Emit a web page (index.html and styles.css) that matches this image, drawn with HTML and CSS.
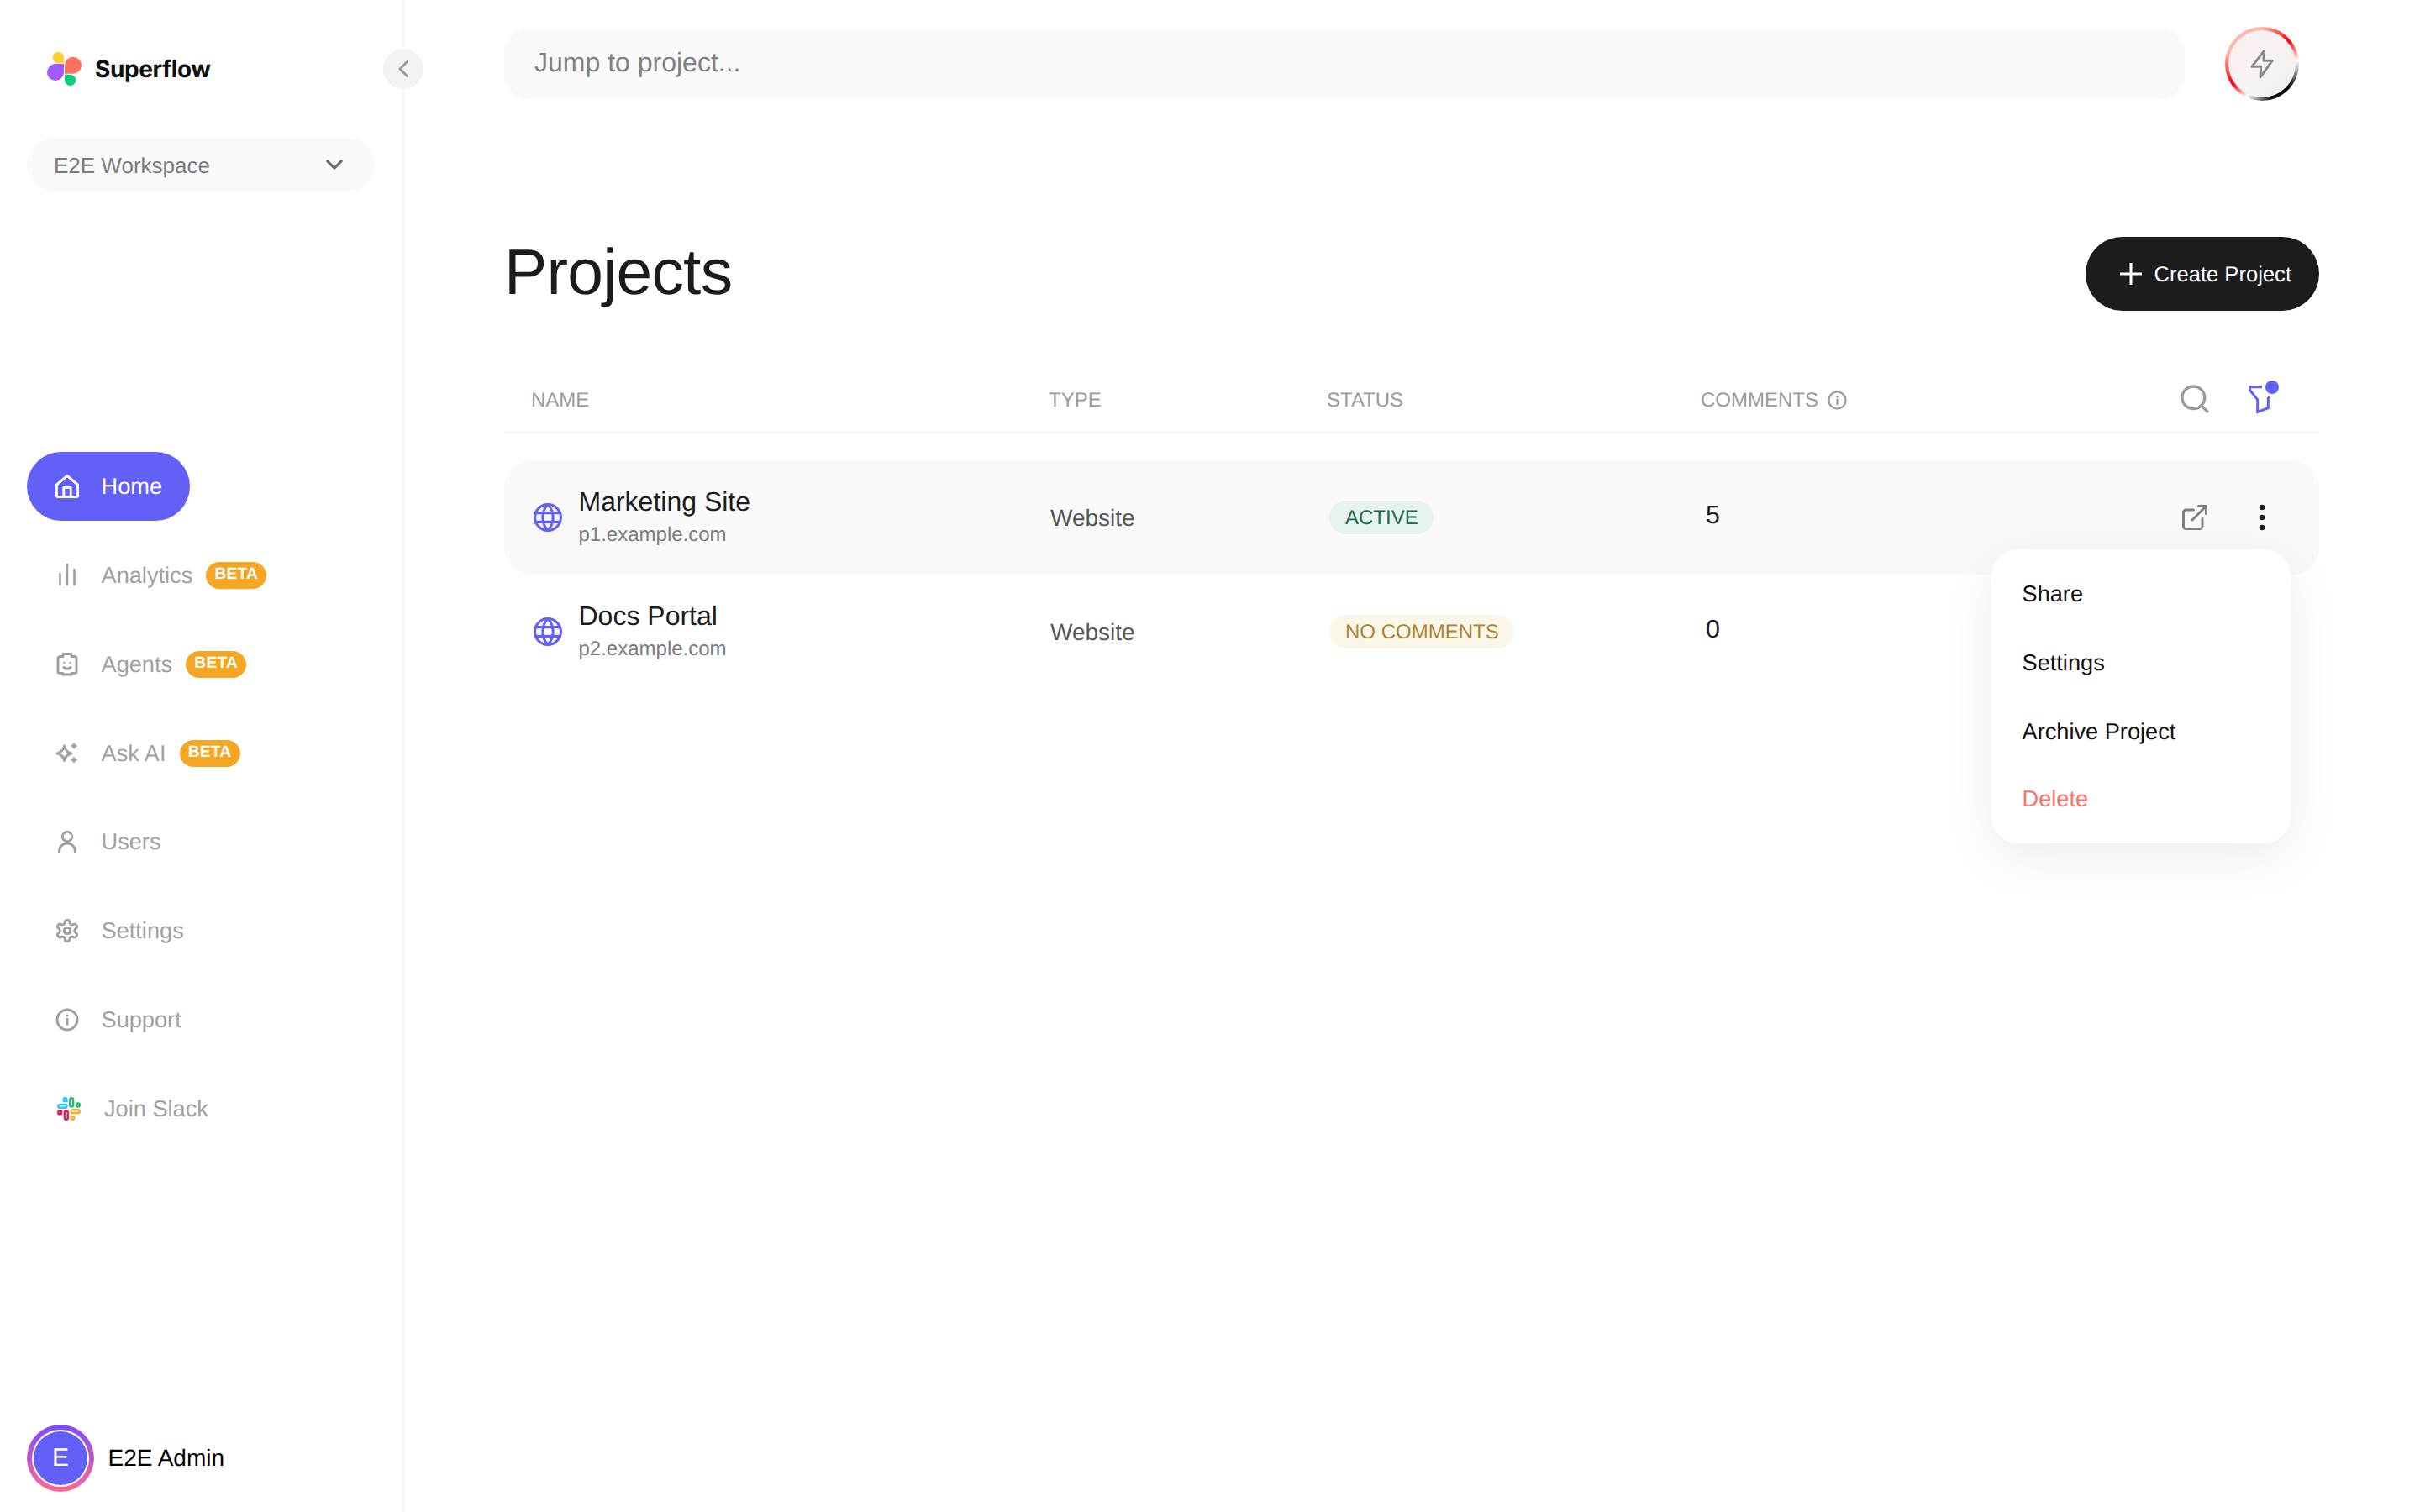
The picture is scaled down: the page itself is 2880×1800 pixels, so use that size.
FILE: index.html
```html
<!DOCTYPE html>
<html lang="en">
<head>
<meta charset="utf-8">
<title>Projects - Superflow</title>
<link rel="stylesheet" href="styles.css">
</head>
<body>
<aside class="sidebar">
  <div class="brand">
    <svg class="logo" viewBox="56 62 41 40">
      <path fill="#ffcf2e" d="M76 75.3H69.3A6.67 6.67 0 1 1 76 68.7Z"/>
      <path fill="#a259ff" d="M76 76V86A10 10 0 1 1 66 76Z"/>
      <path fill="#ff7262" d="M77 87.7V77.7A10 10 0 1 1 87 87.7Z"/>
      <path fill="#0acf83" d="M77 88.7H83.7A6.67 6.67 0 1 1 77 95.3Z"/>
    </svg>
    <span class="brand-name">Superflow</span>
  </div>
  <button class="collapse" type="button" aria-label="Collapse">
    <svg viewBox="0 0 14 22" class="collapse-icon"><path d="M11.5 2.5 3 11l8.5 8.5"/></svg>
  </button>
  <div class="workspace">
    <span>E2E Workspace</span>
    <svg viewBox="0 0 24 16" class="ws-chevron"><path d="M3 3l9 9 9-9"/></svg>
  </div>
  <nav class="nav">
    <a class="nav-item active">
      <svg class="nav-icon" viewBox="2 2 20 20"><path d="M3 10.6 12 3l9 7.6V19.5a1.5 1.5 0 0 1-1.5 1.5h-15A1.5 1.5 0 0 1 3 19.5Z"/><path d="M9 21v-8h6v8"/></svg>
      <span>Home</span>
    </a>
    <a class="nav-item">
      <svg class="nav-icon bars" viewBox="0 0 28 28"><path d="M5.5 25V12M14 25V1M22.5 25V7"/></svg>
      <span>Analytics</span><b class="beta">BETA</b>
    </a>
    <a class="nav-item">
      <svg class="nav-icon" viewBox="0 0 28 28"><path d="M9 1.5h10v3h3.5A2.5 2.5 0 0 1 25 7v15a2.5 2.5 0 0 1-2.5 2.5H19V26H9v-1.5H5.500A2.500 2.500 0 0 1 3 22V7a2.500 2.500 0 0 1 2.500-2.500H9Z"/><path d="M10 17.500q4 3.500 8 0"/><circle class="solid" cx="10.500" cy="12" r="1.300"/><circle class="solid" cx="17.500" cy="12" r="1.300"/></svg>
      <span>Agents</span><b class="beta">BETA</b>
    </a>
    <a class="nav-item">
      <svg class="nav-icon" viewBox="0 0 28 28"><path d="M10.500 5Q12 12 19 14 12 15.500 10.500 22.500 9 15.500 2 14 9 12 10.500 5Z"/><path class="solid" d="M22 0.500Q23 4 26.500 5 23 6 22 9.500 21 6 17.500 5 21 4 22 0.500ZM22 17Q23 20.500 26.500 21.500 23 22.500 22 26 21 22.500 17.500 21.500 21 20.500 22 17Z"/></svg>
      <span>Ask AI</span><b class="beta">BETA</b>
    </a>
    <a class="nav-item">
      <svg class="nav-icon" viewBox="0 0 28 28"><circle cx="14" cy="8" r="5.700"/><path d="M4.500 27.500v-2a9.500 9.500 0 0 1 19 0v2"/></svg>
      <span>Users</span>
    </a>
    <a class="nav-item">
      <svg class="nav-icon" viewBox="1 1 22 22"><path class="thin" d="M12.220 2h-.44a2 2 0 0 0-2 2v.18a2 2 0 0 1-1 1.730l-.43.25a2 2 0 0 1-2 0l-.15-.08a2 2 0 0 0-2.730.73l-.22.38a2 2 0 0 0 .73 2.730l.15.1a2 2 0 0 1 1 1.720v.51a2 2 0 0 1-1 1.740l-.15.09a2 2 0 0 0-.73 2.730l.22.38a2 2 0 0 0 2.730.73l.15-.08a2 2 0 0 1 2 0l.43.25a2 2 0 0 1 1 1.730V20a2 2 0 0 0 2 2h.44a2 2 0 0 0 2-2v-.18a2 2 0 0 1 1-1.730l.43-.25a2 2 0 0 1 2 0l.15.08a2 2 0 0 0 2.730-.73l.22-.39a2 2 0 0 0-.73-2.730l-.15-.08a2 2 0 0 1-1-1.740v-.5a2 2 0 0 1 1-1.740l.15-.09a2 2 0 0 0 .73-2.730l-.22-.38a2 2 0 0 0-2.730-.73l-.15.08a2 2 0 0 1-2 0l-.43-.25a2 2 0 0 1-1-1.730V4a2 2 0 0 0-2-2z"/><circle class="thin" cx="12" cy="12" r="3"/></svg>
      <span>Settings</span>
    </a>
    <a class="nav-item">
      <svg class="nav-icon" viewBox="0 0 28 28"><circle cx="14" cy="14" r="12"/><path d="M14 13v6.500"/><circle class="solid" cx="14" cy="9" r="1.600"/></svg>
      <span>Support</span>
    </a>
    <a class="nav-item slack">
      <svg class="nav-icon" viewBox="1 1 22 22">
        <g class="slack-green"><rect x="13" y="2" width="3" height="8" rx="1.500"/><path d="M19 8.500V10h1.500A1.500 1.500 0 1 0 19 8.500"/></g>
        <g class="slack-red"><rect x="8" y="14" width="3" height="8" rx="1.500"/><path d="M5 15.500V14H3.500A1.500 1.500 0 1 0 5 15.500"/></g>
        <g class="slack-yellow"><rect x="14" y="13" width="8" height="3" rx="1.500"/><path d="M15.500 19H14v1.500a1.500 1.500 0 1 0 1.500-1.500"/></g>
        <g class="slack-blue"><rect x="2" y="8" width="8" height="3" rx="1.500"/><path d="M8.500 5H10V3.500A1.500 1.500 0 1 0 8.500 5"/></g>
      </svg>
      <span>Join Slack</span>
    </a>
  </nav>
  <div class="profile">
    <div class="avatar-ring"><div class="avatar">E</div></div>
    <span class="profile-name">E2E Admin</span>
  </div>
</aside>

<main class="main">
  <div class="topbar">
    <div class="jump">Jump to project...</div>
    <button class="bolt" type="button" aria-label="Activity">
      <span class="bolt-inner">
        <svg viewBox="0 0 48 48" class="bolt-icon"><path d="M26 9.200 12 27.200h10.700L22 39.800 36.300 20.200H26Z"/></svg>
      </span>
    </button>
  </div>

  <div class="title-row">
    <h1>Projects</h1>
    <button class="create" type="button">
      <svg viewBox="0 0 26 26" class="plus"><path d="M13 0v26M0 13h26"/></svg>
      <span class="create-label">Create Project</span>
    </button>
  </div>

  <div class="grid head">
    <div>NAME</div>
    <div>TYPE</div>
    <div>STATUS</div>
    <div class="comments-head">COMMENTS
      <svg viewBox="0 0 24 24" class="info"><circle cx="12" cy="12" r="10.500"/><path d="M12 11v6"/><circle class="solid" cx="12" cy="7.500" r="1.300"/></svg>
    </div>
    <div class="actions">
      <svg viewBox="0 0 24 24" class="act gray"><circle cx="11" cy="11" r="8"/><path d="m21 21-4.300-4.300"/></svg>
      <svg viewBox="0 0 40 40" class="act filter"><path d="M20 5.700H5.500V9.500L14.700 20.700V35.500L27.300 30.700V19.500L29 17.500"/><circle cx="32" cy="6" r="8"/></svg>
    </div>
  </div>

  <div class="grid row hover">
    <div class="name-cell">
      <svg viewBox="1 1 22 22" class="globe"><circle cx="12" cy="12" r="10"/><path d="M12 2a14.500 14.500 0 0 0 0 20 14.500 14.500 0 0 0 0-20M2.600 8.500h18.800M2.600 15.500h18.800"/></svg>
      <div class="name-stack"><div class="pname">Marketing Site</div><div class="purl">p1.example.com</div></div>
    </div>
    <div class="ptype">Website</div>
    <div><span class="pill green">ACTIVE</span></div>
    <div class="count">5</div>
    <div class="actions">
      <svg viewBox="0 0 24 24" class="act ext"><path d="M18 13v6a2 2 0 0 1-2 2H5a2 2 0 0 1-2-2V8a2 2 0 0 1 2-2h6"/><path d="M15 3h6v6M10 14 21 3"/></svg>
      <svg viewBox="0 0 40 40" class="act kebab"><circle cx="20" cy="8" r="3.300"/><circle cx="20" cy="20" r="3.300"/><circle cx="20" cy="32" r="3.300"/></svg>
    </div>
    <div class="menu">
      <div class="menu-item">Share</div>
      <div class="menu-item">Settings</div>
      <div class="menu-item">Archive Project</div>
      <div class="menu-item danger">Delete</div>
    </div>
  </div>

  <div class="grid row">
    <div class="name-cell">
      <svg viewBox="1 1 22 22" class="globe"><circle cx="12" cy="12" r="10"/><path d="M12 2a14.500 14.500 0 0 0 0 20 14.500 14.500 0 0 0 0-20M2.600 8.500h18.800M2.600 15.500h18.800"/></svg>
      <div class="name-stack"><div class="pname">Docs Portal</div><div class="purl">p2.example.com</div></div>
    </div>
    <div class="ptype">Website</div>
    <div><span class="pill amber">NO COMMENTS</span></div>
    <div class="count">0</div>
    <div></div>
  </div>
</main>
</body>
</html>
```

FILE: styles.css
```css
* { box-sizing: border-box; }
html, body { margin: 0; height: 100%; }
body {
  display: flex;
  width: 2880px;
  height: 1800px;
  overflow: hidden;
  background: #fff;
  font-family: "Liberation Sans", Arial, sans-serif;
  color: #1c1c1e;
  text-rendering: geometricPrecision;
}
svg { display: block; flex: none; fill: none; stroke-linecap: round; stroke-linejoin: round; }

/* Sidebar */
.sidebar {
  position: relative;
  flex: none;
  width: 482px;
  height: 1800px;
  padding: 62px 32px 24px;
  border-right: 4px solid #f8f8f8;
  display: flex;
  flex-direction: column;
}
.brand { display: flex; align-items: center; gap: 16px; height: 40px; padding-left: 24px; }
.logo { width: 41px; height: 40px; }
.brand-name { font-family: Inter, "Liberation Sans", sans-serif; font-weight: 700; font-size: 28px; color: #111; letter-spacing: -0.4px; }
.collapse {
  position: absolute;
  top: 58px;
  right: -26px;
  width: 48px;
  height: 48px;
  padding: 0;
  border: 0;
  border-radius: 50%;
  background: #f3f3f3;
  display: flex;
  align-items: center;
  justify-content: center;
}
.collapse-icon { width: 14px; height: 22px; stroke: #9a9a9a; stroke-width: 3; }
.workspace {
  margin-top: 62px;
  height: 64px;
  padding: 2px 37px 0 32px;
  border-radius: 32px;
  background: #f9f9f9;
  display: flex;
  align-items: center;
  justify-content: space-between;
  font-size: 26px;
  color: #7b7b83;
}
.ws-chevron { width: 22px; height: 15px; stroke: #6b6b70; stroke-width: 3.300; margin-top: -2px; }

.nav { margin-top: 310px; display: flex; flex-direction: column; gap: 23.86px; align-items: flex-start; }
.nav-item {
  height: 82px;
  padding: 0 33px 0 34px;
  border-radius: 41px;
  display: flex;
  align-items: center;
  font-size: 27.2px;
  color: #a0a0a5;
}
.nav-item > span { margin-left: 26.5px; }
.nav-item.active { background: #6360f7; color: #fff; }
.nav-item.slack { padding-left: 36px; }
.nav-item.slack > span { margin-left: 28px; }
.nav-icon { width: 28px; height: 28px; stroke: #a0a0a0; stroke-width: 3; }
.nav-icon[viewBox="2 2 20 20"] { stroke: #fff; stroke-width: 2.100; }
.nav-icon.bars { stroke-width: 2.600; }
.nav-icon .thin { stroke-width: 2.300; }
.nav-icon .solid { fill: #a0a0a0; stroke: none; }
.slack .nav-icon { stroke-width: 2; }
.slack-green { stroke: #2eb67d; }
.slack-red { stroke: #e01e5a; }
.slack-yellow { stroke: #ecb22e; }
.slack-blue { stroke: #36c5f0; }
.beta {
  margin-left: 16px;
  width: 72px;
  height: 32px;
  border-radius: 16px;
  background: #f5a623;
  color: #fff;
  font-size: 19.2px;
  font-weight: 700;
  letter-spacing: 0.2px;
  line-height: 29px;
  text-align: center;
}
.profile { margin-top: auto; display: flex; align-items: center; gap: 16.5px; }
.avatar-ring {
  width: 80px;
  height: 80px;
  padding: 2px;
  border-radius: 50%;
  background:
    linear-gradient(#fff, #fff) padding-box,
    linear-gradient(180deg, #7a4dff, #ff6a8c) border-box;
  border: 6px solid transparent;
  display: flex;
}
.avatar {
  flex: 1;
  border-radius: 50%;
  background: #6360f7;
  color: #fff;
  font-size: 30px;
  display: flex;
  align-items: center;
  justify-content: center;
}
.profile-name { font-size: 28px; color: #000; }

/* Main */
.main { position: relative; flex: 1; min-width: 0; padding: 32px 120px 0 118px; }
.topbar { display: flex; align-items: center; gap: 48px; height: 88px; }
.jump {
  width: 2000px;
  height: 84px;
  padding: 0 36px 4px;
  border-radius: 28px;
  background: #f9f9f9;
  display: flex;
  align-items: center;
  font-size: 32px;
  color: #808085;
}
.bolt {
  width: 88px;
  height: 88px;
  padding: 4px;
  border: 0;
  border-radius: 50%;
  background: conic-gradient(#ffb5a8 0deg, #ff0000 50deg, #ffffff 85deg, #000000 130deg, #111 165deg, #ffffff 205deg, #ff0000 235deg, #ffb5a8 290deg, #ffb5a8 360deg);
}
.bolt-inner {
  display: flex;
  align-items: center;
  justify-content: center;
  width: 100%;
  height: 100%;
  border-radius: 50%;
  background: linear-gradient(135deg, #fbeeee 0%, #f7f3f3 55%, #eeeeee 100%);
}
.bolt-icon { width: 48px; height: 48px; stroke: #8a8a8a; stroke-width: 3; }

.title-row { margin-top: 162px; height: 88px; display: flex; align-items: center; justify-content: space-between; }
h1 { margin: -4px 0 0; font-size: 76.8px; font-weight: 400; letter-spacing: -0.770px; color: #1c1c1e; }
.create {
  height: 88px;
  padding: 0 33px 0 40.5px;
  border: 0;
  border-radius: 44px;
  background: #1c1c1e;
  color: #fff;
  display: flex;
  align-items: center;
  gap: 14.5px;
  font-family: inherit;
  font-size: 25.6px;
  text-rendering: geometricPrecision;
}
.create-label { padding-top: 2px; }
.plus { width: 26px; height: 26px; stroke: #fff; stroke-width: 3; }

.grid { display: grid; grid-template-columns: 615px 332px 448px 1fr auto; align-items: center; }
.head {
  margin-top: 66px;
  height: 80px;
  padding: 4px 0 0 32px;
  border-bottom: 2px solid #f3f3f4;
  grid-template-columns: 616px 331px 445px 1fr auto;
  font-size: 24px;
  color: #9a9a9f;
}
.head .actions { margin-top: -4px; }
.comments-head { display: flex; align-items: center; gap: 11px; }
.info { width: 23px; height: 23px; stroke: #9a9a9f; stroke-width: 2.200; margin-top: -1px; }
.info .solid { fill: #9a9a9f; stroke: none; }
.actions { display: flex; justify-content: flex-end; gap: 40px; padding-right: 48px; }
.act { width: 40px; height: 40px; overflow: visible; }
.gray { stroke: #9a9a9a; stroke-width: 2; }
.filter path { stroke: #6360f7; stroke-width: 3; stroke-linecap: butt; stroke-linejoin: miter; }
.filter circle { fill: #6360f7; }
.ext { stroke: #808085; stroke-width: 2; padding: 2px; }
.kebab circle { fill: #1c1c1e; }

.row { position: relative; height: 136px; padding-left: 35px; }
.head + .row { margin-top: 32px; }
.row.hover { background: #f9f9f9; border-radius: 32px; }
.name-cell { display: flex; align-items: center; gap: 19.5px; }
.globe { width: 34px; height: 34px; stroke: #6360f7; stroke-width: 2; }
.name-stack { margin-top: 2px; }
.pname { font-size: 32px; line-height: 40px; color: #1c1c1e; }
.purl { font-size: 24px; line-height: 40px; color: #7b7b83; }
.ptype { font-size: 28px; color: #55555a; margin-top: 2px; }
.pill {
  display: inline-block;
  height: 40px;
  padding: 0 18px 0 19px;
  border-radius: 20px;
  font-size: 24px;
  line-height: 41px;
  vertical-align: top;
}
.green { background: #e8f3ef; color: #1a6b4f; }
.amber { background: #fbf6ea; color: #b08530; }
.count { font-size: 30.4px; color: #1c1c1e; padding-bottom: 5px; }

.menu {
  position: absolute;
  top: 106px;
  right: 34px;
  width: 356px;
  padding: 11px 0 13px;
  border-radius: 32px;
  background: #fff;
  box-shadow: 0 16px 60px rgba(0, 0, 0, 0.08);
  z-index: 5;
}
.menu-item { height: 82px; padding: 1px 0 0 36.5px; display: flex; align-items: center; font-size: 27.2px; color: #111; }
.menu-item.danger { margin-top: -2px; color: #ff7066; }
```
